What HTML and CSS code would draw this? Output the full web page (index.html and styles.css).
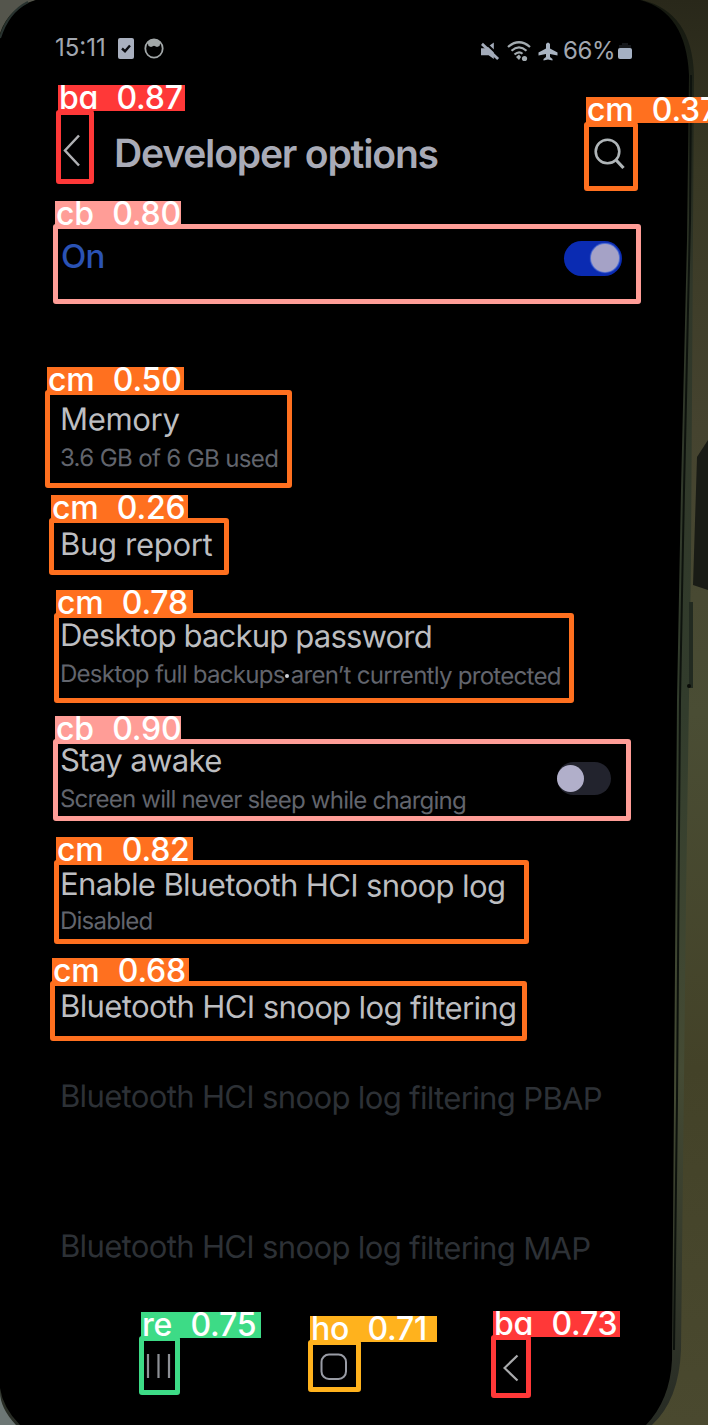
FILE: index.html
```html
<!DOCTYPE html>
<html lang="en">
<head>
<meta charset="utf-8">
<title>Developer options</title>
<link rel="stylesheet" href="styles.css">
</head>
<body>
<main class="stage">
  <svg class="backdrop" viewBox="0 0 708 1425" aria-hidden="true">
    <defs>
      <linearGradient id="wall" x1="0" y1="0" x2="0" y2="1">
        <stop offset="0" stop-color="#29281a"/><stop offset=".12" stop-color="#383824"/>
        <stop offset=".3" stop-color="#45432f"/><stop offset=".5" stop-color="#4a4d34"/>
        <stop offset=".75" stop-color="#434228"/><stop offset="1" stop-color="#4a492f"/>
      </linearGradient>
      <linearGradient id="rim" x1="0" y1="0" x2="0" y2="1">
        <stop offset="0" stop-color="#15180f"/><stop offset=".2" stop-color="#303729"/>
        <stop offset=".5" stop-color="#323c2c"/><stop offset=".75" stop-color="#454b34"/><stop offset="1" stop-color="#272b24"/>
      </linearGradient>
    </defs>
    <rect width="708" height="1425" fill="url(#wall)"/>
    <path d="M0 0H60V60H0Z" fill="#54554c"/>
    <path d="M0 1360H40V1425H0Z" fill="#6d7775"/>
    <path d="M708 440 697 457 693 585 708 590Z" fill="#191b15"/>
    <path d="M30 0H642Q692 12 694 75L691 560 686 900 681 1350Q679 1400 652 1425H16Q0 1408 0 1392V33Q9 7 36 0Z" fill="url(#rim)"/>
    <path d="M36 0H640Q686 12 689 75L687 240 681 490 677 700 674 1100 672 1360Q670 1400 646 1425H20Q3 1408 0 1388V38Q9 9 36 0Z" fill="#000"/>
    <path d="M691 75 690 220 684 490 680 700 677 1100 674 1350" fill="none" stroke="#0d120d" stroke-width="2"/>
    <path d="M0 38Q8 12 28 2" fill="none" stroke="#28322f" stroke-width="2"/>
    <path d="M691 602V688" fill="none" stroke="#222a20" stroke-width="4"/>
    <circle cx="689" cy="686" r="2" fill="#0a0c08"/>
  </svg>

  <section class="screen">
    <div class="status">
      <div class="status-left">
        <span class="time">15:11</span>
        <svg class="ic-task" viewBox="0 0 16 21"><rect width="16" height="21" rx="2" fill="#a9b0bf"/><path d="M4 10.500 7 13.200 12 7.500" fill="none" stroke="#0a0b10" stroke-width="2.400"/></svg>
        <svg class="ic-ring" viewBox="0 0 20 21"><ellipse cx="10" cy="10.500" rx="8.700" ry="9.200" fill="none" stroke="#a2a7a8" stroke-width="1.800"/><path d="M3.500 4Q10-1.500 16.500 4L15.500 8 13 9 10 7.800 7 9 4.500 8Z" fill="#a2a7a8"/></svg>
      </div>
      <div class="status-right">
        <svg class="ic-mute" viewBox="0 0 20 20"><path d="M0 7H5L13.500 1V18.500L8 14.500H0Z" fill="#a3abb9"/><path d="M3 0 19 15" stroke="#000" stroke-width="2.400"/><path d="M1 2.500 18 18.500" stroke="#a3abb9" stroke-width="3"/></svg>
        <svg class="ic-wifi" viewBox="0 0 24 21"><g fill="none" stroke="#a3abb0" stroke-width="2.200"><path d="M1 6Q12-3.500 23 6"/><path d="M4.500 9.800Q12 3 19.500 9.800"/><path d="M7.500 13.500Q12 9.500 15.500 12.800"/></g><path d="M9 16 12 13.500 14 16 12 19Z" fill="#a3abb0"/><circle cx="17.500" cy="17.500" r="2.600" fill="#a3abb0"/></svg>
        <svg class="ic-plane" viewBox="0 0 20 19"><path d="M8 2Q10-1 12 2V6.500L19.500 10.500V13.500L12 12V15L14.500 17V18.500L10 17.500 5.500 18.500V17L8 15V12L.5 13.500V10.500L8 6.500Z" fill="#a9b4c2"/></svg>
        <span class="percent">66%</span>
        <svg class="ic-batt" viewBox="0 0 14 18"><path d="M4 1H10V3H13V7H1V3H4Z" fill="#15171a"/><rect y="6" width="14" height="11" rx="2" fill="#a5b1c4"/></svg>
      </div>
    </div>

    <header class="appbar">
      <svg class="ic-back" viewBox="0 0 18 33"><path d="M16 1.500 2 16.500 16 31.500" fill="none" stroke="#b0b1b4" stroke-width="2.500"/></svg>
      <h1 class="heading">Developer options</h1>
      <svg class="ic-search" viewBox="0 0 32 32"><circle cx="13.500" cy="13.500" r="11.800" fill="none" stroke="#afb5b8" stroke-width="2.600"/><path d="M22 22 29.500 30" stroke="#afb5b8" stroke-width="3.200"/></svg>
    </header>

    <div class="master">
      <span class="master-text">On</span>
      <span class="switch switch-on"></span>
    </div>

    <div class="list">
      <div class="row r-memory"><div class="name">Memory</div><div class="sub">3.6 GB of 6 GB used</div></div>
      <div class="row r-bug"><div class="name">Bug report</div></div>
      <div class="row r-backup"><div class="name">Desktop backup password</div><div class="sub">Desktop full backups aren’t currently protected</div></div>
      <div class="row r-awake"><div class="awake-text"><div class="name">Stay awake</div><div class="sub">Screen will never sleep while charging</div></div><span class="switch switch-off"></span></div>
      <div class="row r-snoop"><div class="name">Enable Bluetooth HCI snoop log</div><div class="sub">Disabled</div></div>
      <div class="row r-filter"><div class="name">Bluetooth HCI snoop log filtering</div></div>
      <div class="row r-pbap dim"><div class="name">Bluetooth HCI snoop log filtering PBAP</div></div>
      <div class="row r-map dim"><div class="name">Bluetooth HCI snoop log filtering MAP</div></div>
    </div>

    <nav class="nav">
      <svg class="ic-recent" viewBox="0 0 26 26"><path d="M2 1V25M12.500 1V25M23 1V25" stroke="#8d9095" stroke-width="2.200"/></svg>
      <svg class="ic-home" viewBox="0 0 28 28"><rect x="1.500" y="1.500" width="24.500" height="24.500" rx="7.500" fill="none" stroke="#999ca5" stroke-width="2"/></svg>
      <svg class="ic-navback" viewBox="0 0 16 28"><path d="M14.500 1.500 1.500 14 14.500 26.500" fill="none" stroke="#a9aaac" stroke-width="2.200"/></svg>
    </nav>
  </section>

  <i class="dot"></i>

  <div class="box b1"><b class="tag">ba 0.87</b></div>
  <div class="box b2"><b class="tag">cm 0.37</b></div>
  <div class="box b3"><b class="tag">cb 0.80</b></div>
  <div class="box b4"><b class="tag">cm 0.50</b></div>
  <div class="box b5"><b class="tag">cm 0.26</b></div>
  <div class="box b6"><b class="tag">cm 0.78</b></div>
  <div class="box b7"><b class="tag">cb 0.90</b></div>
  <div class="box b8"><b class="tag">cm 0.82</b></div>
  <div class="box b9"><b class="tag">cm 0.68</b></div>
  <div class="box b10"><b class="tag">re 0.75</b></div>
  <div class="box b11"><b class="tag">ho 0.71</b></div>
  <div class="box b12"><b class="tag">ba 0.73</b></div>
</main>
</body>
</html>
```
FILE: styles.css
```css
* { box-sizing: border-box; }
body { margin: 0; background: #000; font-family: Inter, "Liberation Sans", sans-serif; }
svg { display: block; flex: none; }
.stage { position: relative; width: 708px; height: 1425px; overflow: hidden; }
.backdrop { position: absolute; inset: 0; width: 708px; height: 1425px; }
.screen { position: relative; width: 672px; height: 1425px; display: flex; flex-direction: column; }

.status { height: 80px; padding: 32px 40px 0 55px; display: flex; justify-content: space-between; align-items: flex-start; color: #a2a7b0; }
.status-left, .status-right { display: flex; align-items: center; height: 32px; }
.status-right { margin-top: 3px; }
.time { width: 63px; font-size: 24px; line-height: 32px; }
.ic-task { width: 16px; height: 21px; }
.ic-ring { width: 20px; height: 21px; margin-left: 10px; }
.ic-mute { width: 19px; height: 20px; }
.ic-wifi { width: 24px; height: 21px; margin-left: 7px; }
.ic-plane { width: 20px; height: 19px; margin-left: 7px; }
.percent { width: 54px; margin-left: 5px; font-size: 24px; line-height: 32px; letter-spacing: -.4px; }
.ic-batt { width: 14px; height: 18px; margin-left: 1px; }

.appbar { height: 144px; padding: 48px 46px 0 63px; display: flex; align-items: flex-start; }
.ic-back { width: 18px; height: 33px; margin-top: 6px; }
.heading { flex: 1; margin: 0 0 0 33px; font-size: 39px; line-height: 50px; font-weight: 600; letter-spacing: -1.15px; color: #a9abb7; white-space: nowrap; transform: rotate(.2deg); transform-origin: 0 50%; }
.ic-search { width: 32px; height: 32px; margin-top: 10px; }

.master { height: 175px; padding: 12px 50px 0 61px; display: flex; justify-content: space-between; align-items: flex-start; }
.master-text { font-size: 33px; line-height: 40px; font-weight: 500; letter-spacing: -.8px; color: #2a52b4; }
.switch { position: relative; display: block; border-radius: 18px; }
.switch::after { content: ""; position: absolute; border-radius: 50%; }
.switch-on { width: 58px; height: 35px; margin-top: 5px; background: #0a2bb2; }
.switch-on::after { width: 28px; height: 28px; right: 3px; top: 3px; background: #a5a2c6; box-shadow: 0 0 1px 1px #5c78d6; }
.switch-off { width: 54px; height: 33px; background: #22232d; margin-top: 22px; }
.switch-off::after { width: 27px; height: 27px; left: 0; top: 3px; background: #b1afca; }

.list { padding-left: 60px; color: #bdbec1; white-space: nowrap; }
.name { font-size: 31px; line-height: 40px; letter-spacing: -.6px; transform: rotate(.3deg); transform-origin: 0 50%; }
.sub { margin-top: 3px; font-size: 24px; line-height: 32px; letter-spacing: -.75px; color: #62656d; transform: rotate(.3deg); transform-origin: 0 50%; }
.r-memory { height: 124px; }
.r-memory .name, .r-bug .name { letter-spacing: -.3px; }
.r-memory .sub { letter-spacing: -.62px; }
.r-bug { height: 92px; padding-top: 1px; }
.r-backup { height: 125px; }
.r-backup .name { letter-spacing: -.8px; }
.r-backup .sub { letter-spacing: -.71px; }
.r-awake { height: 124px; padding-right: 61px; display: flex; justify-content: space-between; }
.r-snoop { height: 122px; }
.r-snoop .sub { margin-top: 1px; }
.r-filter { height: 90px; }
.r-pbap { height: 150px; }
.r-map { height: 110px; }
.dim { color: #2d3136; }
.dim .name { letter-spacing: -.64px; }

.nav { height: 89px; padding: 17px 0 0 146px; display: flex; align-items: flex-start; }
.ic-recent { width: 26px; height: 26px; }
.ic-home { width: 28px; height: 28px; margin-left: 148px; }
.ic-navback { width: 16px; height: 28px; margin-left: 155px; margin-top: 1px; }

.dot { position: absolute; left: 285px; top: 674px; width: 4px; height: 4px; border-radius: 50%; background: #d0d4da; }

.box { position: absolute; border: 5px solid var(--c); border-radius: 3px; --c: #ff701f; }
.tag { position: absolute; left: -3px; top: -28px; width: 137px; height: 26px; padding-left: 1px; background: var(--c); color: #fff; font-size: 32px; font-weight: 500; line-height: 26px; letter-spacing: -.2px; word-spacing: 10px; white-space: pre; font-feature-settings: "cv11"; }
.b1 { left: 56px; top: 110px; width: 38px; height: 74px; --c: #ff3838; }
.b2 { left: 584px; top: 122px; width: 54px; height: 69px; }
.b3 { left: 53px; top: 224px; width: 588px; height: 80px; --c: #ff9d97; }
.b4 { left: 45px; top: 390px; width: 247px; height: 98px; }
.b5 { left: 49px; top: 518px; width: 180px; height: 57px; }
.b6 { left: 54px; top: 613px; width: 520px; height: 90px; }
.b7 { left: 53px; top: 739px; width: 578px; height: 82px; --c: #ff9d97; }
.b8 { left: 54px; top: 860px; width: 475px; height: 84px; }
.b9 { left: 50px; top: 981px; width: 477px; height: 60px; }
.b10 { left: 139px; top: 1336px; width: 41px; height: 59px; --c: #3ddb86; }
.b11 { left: 308px; top: 1340px; width: 53px; height: 52px; --c: #ffb21d; }
.b12 { left: 491px; top: 1335px; width: 40px; height: 63px; --c: #ff3838; }
.b1 .tag, .b2 .tag { top: -30px; }
.b1 .tag, .b11 .tag, .b12 .tag { width: 127px; }
.b11 .tag, .b12 .tag, .b10 .tag { top: -29px; }
.b3 .tag, .b7 .tag { width: 126px; }
.b10 .tag { width: 120px; }
```
